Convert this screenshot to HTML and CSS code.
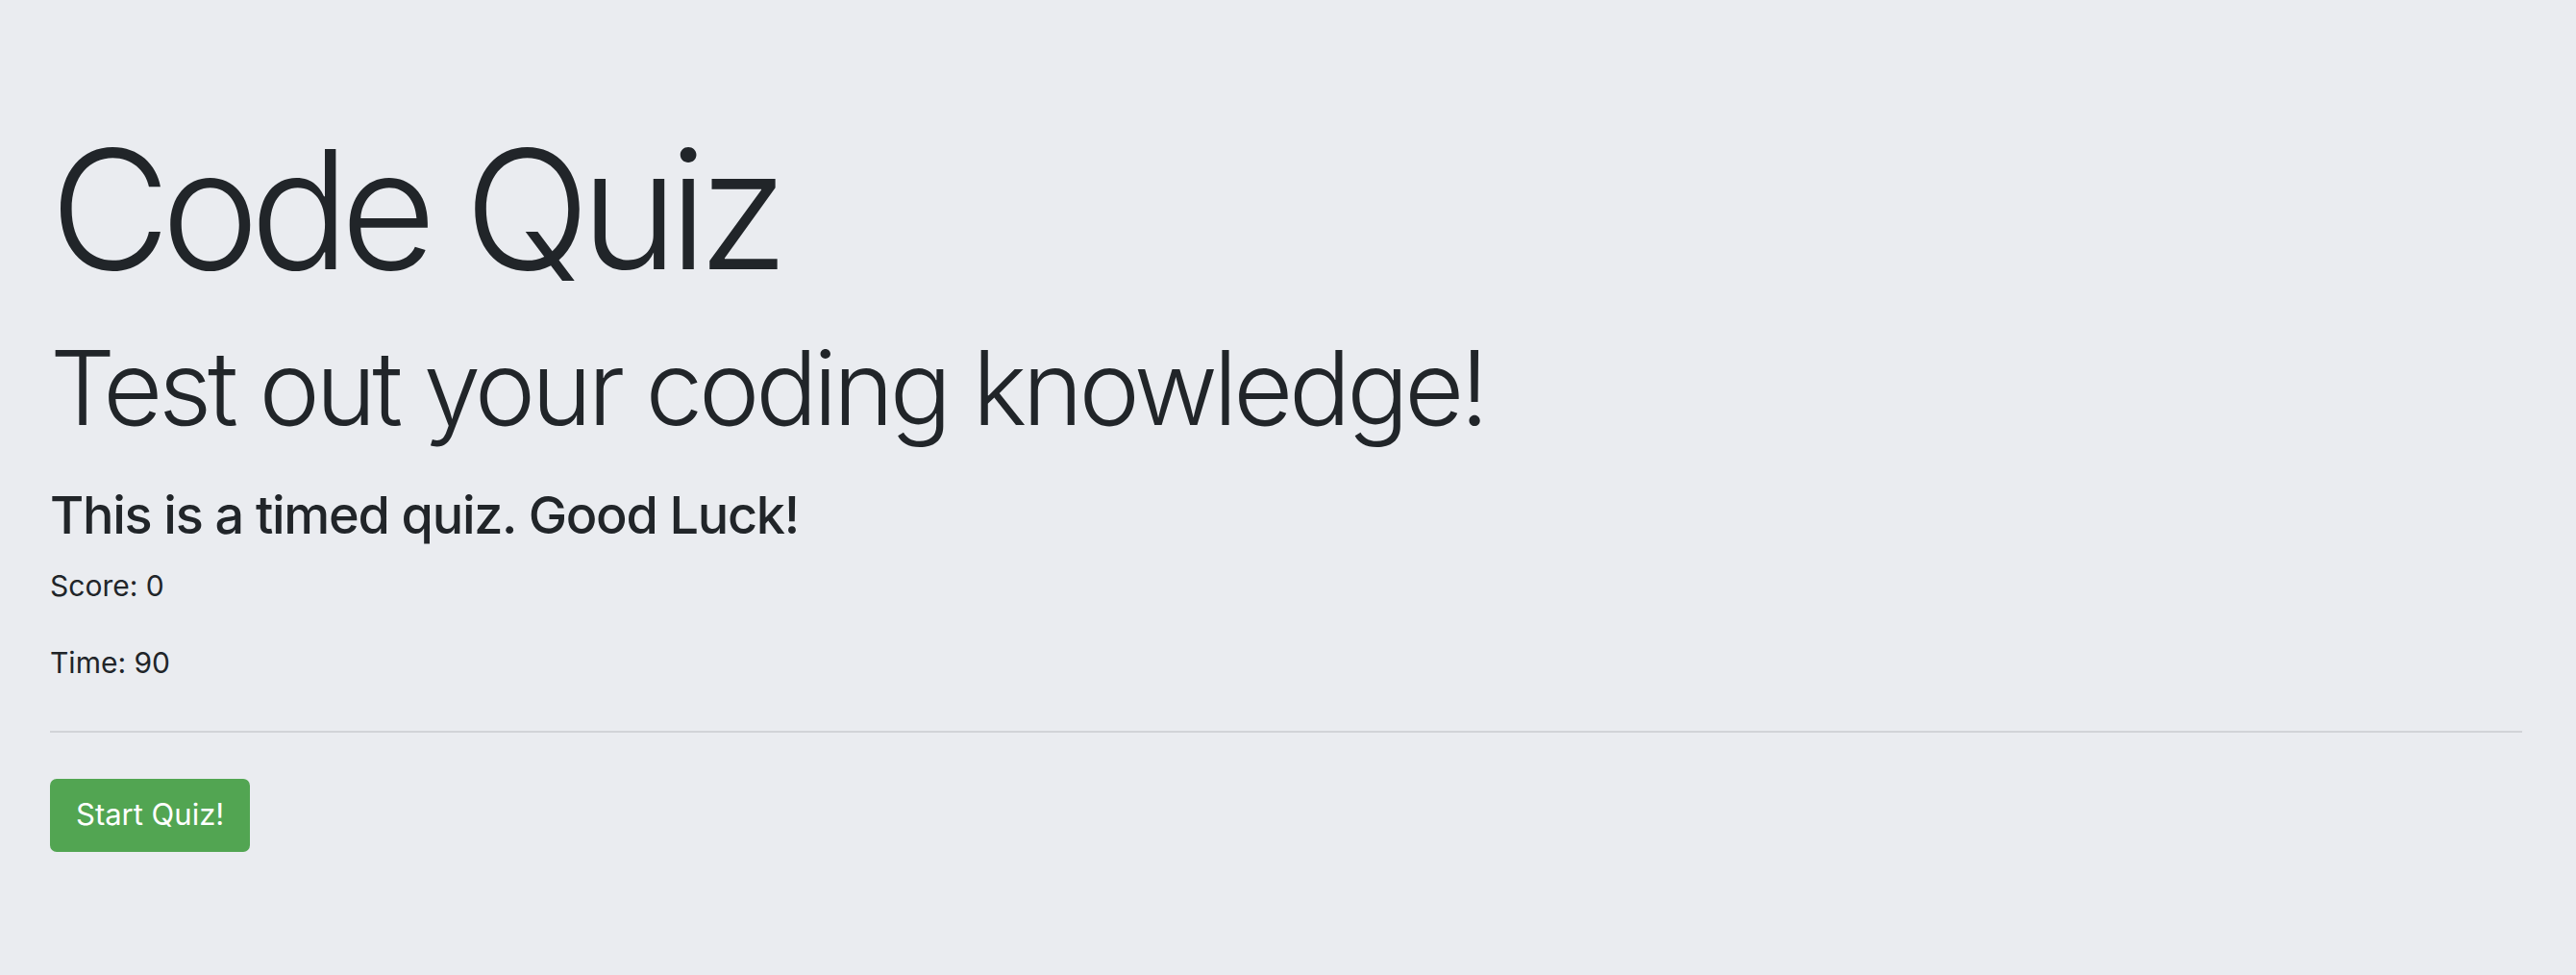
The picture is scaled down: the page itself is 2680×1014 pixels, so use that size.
FILE: index.html
```html
<!DOCTYPE html>
<html lang="en">
<head>
<meta charset="utf-8">
<title>Code Quiz</title>
<link rel="stylesheet" href="styles.css">
</head>
<body>
<main class="jumbotron">
  <h1 class="title">Code Quiz</h1>
  <p class="lead">Test out your coding knowledge!</p>
  <h3 class="subtitle">This is a timed quiz. Good Luck!</h3>
  <p class="stat">Score: 0</p>
  <p class="stat">Time: 90</p>
  <hr class="divider">
  <button class="btn-start" type="button">Start Quiz!</button>
</main>
</body>
</html>
```

FILE: styles.css
```css
html, body {
  margin: 0;
  padding: 0;
  background: #eaecf0;
}

body {
  font-family: Inter, "Noto Sans", "Liberation Sans", sans-serif;
  color: #212529;
  min-height: 1014px;
}

.jumbotron {
  padding: 114px 56px 40px 52px;
}

.title {
  margin: 0 0 19px 0;
  font-size: 172px;
  font-weight: 300;
  line-height: 1.2;
  letter-spacing: -9.5px;
}

.lead {
  margin: 0 0 36px 0;
  font-size: 107px;
  font-weight: 300;
  line-height: 1.2;
  letter-spacing: -4.3px;
}

.subtitle {
  margin: 0 0 18px 0;
  font-size: 54px;
  font-weight: 500;
  line-height: 1.2;
  letter-spacing: -1.3px;
}

.stat {
  margin: 0 0 35px 0;
  font-size: 30px;
  line-height: 1.5;
}

.divider {
  margin: 48px 0 48px 0;
  border: 0;
  border-top: 2px solid #d1d3d7;
  height: 0;
}

.btn-start {
  display: block;
  font-family: inherit;
  font-size: 31px;
  line-height: 1.5;
  padding: 14.75px 27px;
  color: #fff;
  background: #52a552;
  border: 0;
  border-radius: 7px;
}
```
